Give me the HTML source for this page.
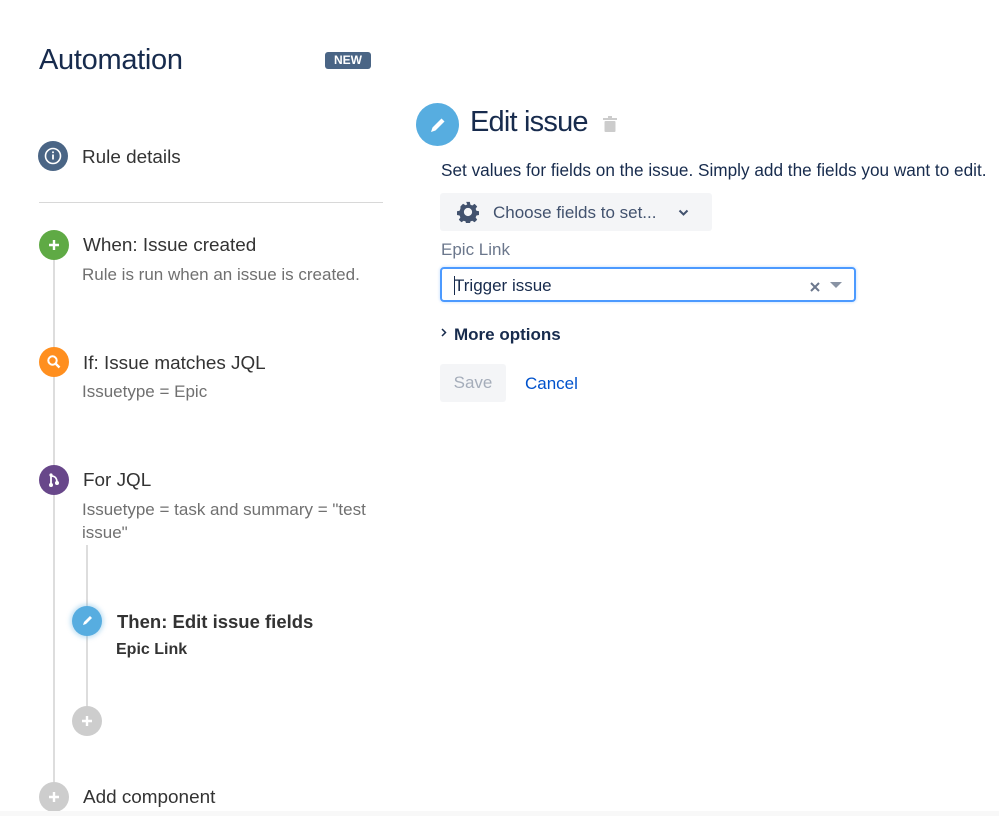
<!DOCTYPE html>
<html><head><meta charset="utf-8"><style>
*{margin:0;padding:0;box-sizing:border-box}
body{width:999px;height:816px;background:#fff;font-family:"Liberation Sans",Arial,sans-serif;position:relative;overflow:hidden}
.a{position:absolute;white-space:nowrap}
.c{position:absolute;border-radius:50%;display:flex;align-items:center;justify-content:center}
.t{font-size:18.9px;color:#333;line-height:22px}
.s{font-size:17px;color:#707070;line-height:22px}
</style></head><body>
<div class="a" style="left:39px;top:44px;font-size:29px;color:#172B4D;letter-spacing:-0.3px">Automation</div>
<div class="a" style="left:325px;top:52px;width:46px;height:17px;background:#4a6585;border-radius:3px;color:#fff;font-size:12px;font-weight:bold;text-align:center;line-height:17px">NEW</div>

<div class="c" style="left:38px;top:141px;width:30px;height:30px;background:#4a6585"><svg width="18" height="18" viewBox="0 0 18 18"><circle cx="9" cy="9" r="7.5" fill="none" stroke="#fff" stroke-width="1.6"/><rect x="8.1" y="7.5" width="1.8" height="5" fill="#fff"/><circle cx="9" cy="5.3" r="1" fill="#fff"/></svg></div>
<div class="a t" style="left:82px;top:147px">Rule details</div>
<div class="a" style="left:39px;top:202px;width:344px;height:1px;background:#d8d8d8"></div>

<div class="a" style="left:53px;top:258px;width:2px;height:530px;background:#ddd"></div>
<div class="a" style="left:86px;top:545px;width:2px;height:162px;background:#ddd"></div>

<div class="c" style="left:39px;top:230px;width:30px;height:30px;background:#5faa45"><svg width="14" height="14"><path d="M7 2v10M2 7h10" stroke="#fff" stroke-width="2.4"/></svg></div>
<div class="a t" style="left:83px;top:235px">When: Issue created</div>
<div class="a s" style="left:82px;top:264px">Rule is run when an issue is created.</div>

<div class="c" style="left:39px;top:347px;width:30px;height:30px;background:#ff8f1f"><svg width="16" height="16"><circle cx="6.5" cy="6.5" r="4.2" fill="none" stroke="#fff" stroke-width="2"/><path d="M9.5 9.5l4 4" stroke="#fff" stroke-width="2.4"/></svg></div>
<div class="a t" style="left:83px;top:353px">If: Issue matches JQL</div>
<div class="a s" style="left:82px;top:381px">Issuetype = Epic</div>

<div class="c" style="left:39px;top:465px;width:30px;height:30px;background:#68478a"><svg width="16" height="16"><path d="M5 3v10M5 4c5 0 6 3 6 7" stroke="#fff" stroke-width="1.8" fill="none"/><circle cx="5" cy="13" r="2" fill="#fff"/><circle cx="11" cy="11" r="2" fill="#fff"/><circle cx="5" cy="3" r="1.6" fill="#fff"/></svg></div>
<div class="a t" style="left:83px;top:470px">For JQL</div>
<div class="a s" style="left:82px;top:499px">Issuetype = task and summary = "test</div>
<div class="a s" style="left:82px;top:522px">issue"</div>

<div class="c" style="left:72px;top:606px;width:30px;height:30px;background:#57ade0;box-shadow:0 0 4px 2px rgba(87,173,224,.35)"><svg width="14" height="14"><path d="M3 11l1-3 6-6 2 2-6 6z" fill="#fff"/></svg></div>
<div class="a t" style="left:117px;top:611px;font-weight:bold;color:#333;font-size:18.5px">Then: Edit issue fields</div>
<div class="a" style="left:116px;top:641px;font-size:16px;font-weight:bold;color:#333">Epic Link</div>

<div class="c" style="left:72px;top:706px;width:30px;height:30px;background:#cdcdcd"><svg width="12" height="12"><path d="M6 1v10M1 6h10" stroke="#fff" stroke-width="2.4"/></svg></div>
<div class="c" style="left:39px;top:782px;width:30px;height:30px;background:#cdcdcd"><svg width="12" height="12"><path d="M6 1v10M1 6h10" stroke="#fff" stroke-width="2.4"/></svg></div>
<div class="a t" style="left:83px;top:787px">Add component</div>
<div class="a" style="left:0;top:811px;width:999px;height:5px;background:#f8f8f8"></div>

<div class="c" style="left:416px;top:103px;width:43px;height:43px;background:#57ade0"><svg width="20" height="20"><path d="M3 17l1.5-4.5 9-9 3 3-9 9z" fill="#fff"/></svg></div>
<div class="a" style="left:470px;top:106px;font-size:29px;color:#172B4D;letter-spacing:-0.8px">Edit issue</div>
<svg class="a" style="left:603px;top:116px" width="14" height="17"><rect x="0" y="2" width="14" height="2" fill="#ccc"/><rect x="5" y="0" width="4" height="3" fill="#ccc"/><rect x="1.5" y="5" width="11" height="11" rx="1" fill="#ccc"/></svg>
<div class="a" style="left:441px;top:160px;font-size:17.2px;color:#172B4D">Set values for fields on the issue. Simply add the fields you want to edit.</div>

<div class="a" style="left:440px;top:193px;width:272px;height:38px;background:#f4f5f7;border-radius:3px"></div>
<svg class="a" style="left:457px;top:201px" width="22" height="22" viewBox="0 0 24 24"><path fill="#42526E" d="M10 1h4l.6 3 2 .9 2.6-1.7 2.8 2.8-1.7 2.6.9 2 3 .6v4l-3 .6-.9 2 1.7 2.6-2.8 2.8-2.6-1.7-2 .9-.6 3h-4l-.6-3-2-.9-2.6 1.7-2.8-2.8 1.7-2.6-.9-2-3-.6v-4l3-.6.9-2L3.8 5.8l2.8-2.8 2.6 1.7 2-.9zM12 7.5a4.5 4.5 0 100 9 4.5 4.5 0 000-9z"/></svg>
<div class="a" style="left:493px;top:203px;font-size:17px;color:#42526E">Choose fields to set...</div>
<svg class="a" style="left:678px;top:209px" width="11" height="8"><path d="M1.5 1.5l4 4 4-4" stroke="#42526E" stroke-width="2" fill="none"/></svg>

<div class="a" style="left:441px;top:240px;font-size:17px;color:#6B778C">Epic Link</div>
<div class="a" style="left:440px;top:267px;width:416px;height:35px;border:2px solid #4c9aff;border-radius:4px;box-shadow:0 0 2px 1px rgba(76,154,255,.2)"></div>
<div class="a" style="left:454px;top:276px;width:1px;height:19px;background:#172B4D"></div>
<div class="a" style="left:454px;top:276px;font-size:17px;color:#172B4D">Trigger issue</div>
<svg class="a" style="left:810px;top:282px" width="10" height="10"><path d="M1 1l8 8M9 1l-8 8" stroke="#6B778C" stroke-width="2"/></svg>
<svg class="a" style="left:830px;top:282px" width="12" height="7"><path d="M0 0h12l-6 6z" fill="#8993a4"/></svg>

<svg class="a" style="left:441px;top:328px" width="6" height="9"><path d="M1 1l3.5 3.5L1 8" stroke="#172B4D" stroke-width="1.5" fill="none"/></svg>
<div class="a" style="left:454px;top:325px;font-size:17px;font-weight:bold;color:#172B4D">More options</div>

<div class="a" style="left:440px;top:364px;width:66px;height:38px;background:#f4f5f7;border-radius:3px;color:#a5adba;font-size:17px;text-align:center;line-height:38px">Save</div>
<div class="a" style="left:525px;top:374px;font-size:17px;color:#0052CC">Cancel</div>
</body></html>
